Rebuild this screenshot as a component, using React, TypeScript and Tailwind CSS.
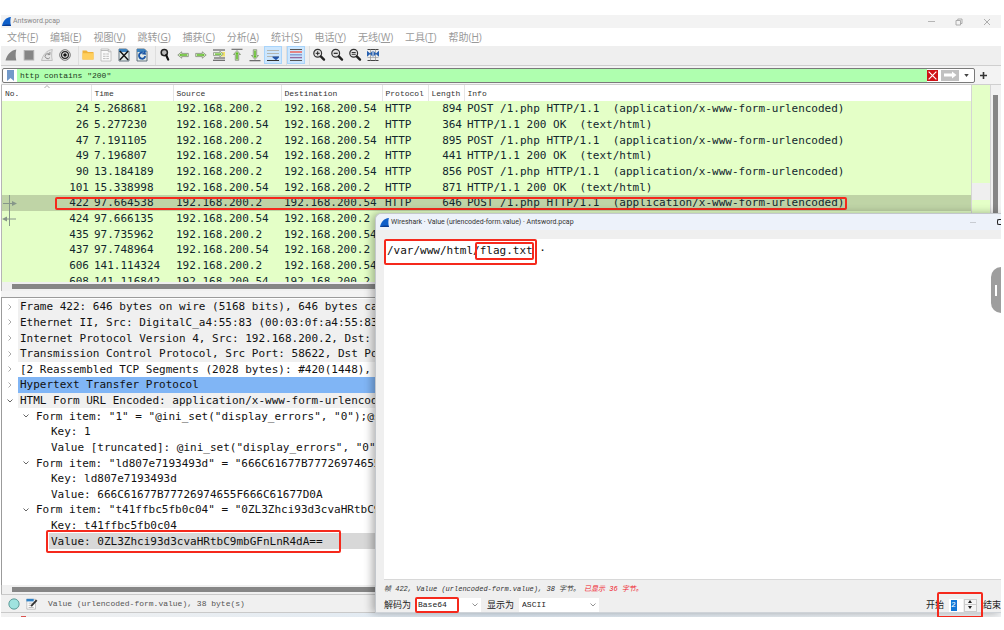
import type { ReactNode } from 'react';
import { useState } from 'react';

type Packet = {
  no: number;
  time: string;
  source: string;
  destination: string;
  length: number;
  info: string;
};

type TreeRow = {
  text: string;
  level: number;
  state?: 'open' | 'closed';
  tone?: 'gray' | 'blue' | 'selected';
};

const CLIENT = '192.168.200.2';
const SERVER = '192.168.200.54';
const POST = 'POST /1.php HTTP/1.1  (application/x-www-form-urlencoded)';
const OK = 'HTTP/1.1 200 OK  (text/html)';

const packets: Packet[] = [
  { no: 24, time: '5.268681', source: CLIENT, destination: SERVER, length: 894, info: POST },
  { no: 26, time: '5.277230', source: SERVER, destination: CLIENT, length: 364, info: OK },
  { no: 47, time: '7.191105', source: CLIENT, destination: SERVER, length: 895, info: POST },
  { no: 49, time: '7.196807', source: SERVER, destination: CLIENT, length: 441, info: OK },
  { no: 90, time: '13.184189', source: CLIENT, destination: SERVER, length: 856, info: POST },
  { no: 101, time: '15.338998', source: SERVER, destination: CLIENT, length: 871, info: OK },
  { no: 422, time: '97.664538', source: CLIENT, destination: SERVER, length: 646, info: POST },
  { no: 424, time: '97.666135', source: SERVER, destination: CLIENT, length: 441, info: OK },
  { no: 435, time: '97.735962', source: CLIENT, destination: SERVER, length: 895, info: POST },
  { no: 437, time: '97.748964', source: SERVER, destination: CLIENT, length: 441, info: OK },
  { no: 606, time: '141.114324', source: CLIENT, destination: SERVER, length: 856, info: POST },
  { no: 608, time: '141.116842', source: SERVER, destination: CLIENT, length: 871, info: OK },
];

const tree: TreeRow[] = [
  { text: 'Frame 422: 646 bytes on wire (5168 bits), 646 bytes captured', level: 0, state: 'closed', tone: 'gray' },
  { text: 'Ethernet II, Src: DigitalC_a4:55:83 (00:03:0f:a4:55:83)', level: 0, state: 'closed', tone: 'gray' },
  { text: 'Internet Protocol Version 4, Src: 192.168.200.2, Dst: 192.168.200.54', level: 0, state: 'closed', tone: 'gray' },
  { text: 'Transmission Control Protocol, Src Port: 58622, Dst Port: 80', level: 0, state: 'closed', tone: 'gray' },
  { text: '[2 Reassembled TCP Segments (2028 bytes): #420(1448), #422(580)]', level: 0, state: 'closed' },
  { text: 'Hypertext Transfer Protocol', level: 0, state: 'closed', tone: 'blue' },
  { text: 'HTML Form URL Encoded: application/x-www-form-urlencoded', level: 0, state: 'open', tone: 'gray' },
  { text: 'Form item: "1" = "@ini_set("display_errors", "0");@set_time_limit(0)', level: 1, state: 'open' },
  { text: 'Key: 1', level: 2 },
  { text: 'Value [truncated]: @ini_set("display_errors", "0");', level: 2 },
  { text: 'Form item: "ld807e7193493d" = "666C61677B77726974655F666C61677D0A"', level: 1, state: 'open' },
  { text: 'Key: ld807e7193493d', level: 2 },
  { text: 'Value: 666C61677B77726974655F666C61677D0A', level: 2 },
  { text: 'Form item: "t41ffbc5fb0c04" = "0ZL3Zhci93d3cvaHRtbC9mbGFnLnR4dA=="', level: 1, state: 'open' },
  { text: 'Key: t41ffbc5fb0c04', level: 2 },
  { text: 'Value: 0ZL3Zhci93d3cvaHRtbC9mbGFnLnR4dA==', level: 2, tone: 'selected' },
];

const menus = [
  ['文件', 'F'],
  ['编辑', 'E'],
  ['视图', 'V'],
  ['跳转', 'G'],
  ['捕获', 'C'],
  ['分析', 'A'],
  ['统计', 'S'],
  ['电话', 'Y'],
  ['无线', 'W'],
  ['工具', 'T'],
  ['帮助', 'H'],
];

const indents = ['pl-[18px]', 'pl-[34px]', 'pl-[49px]'];
const arrowIndents = ['left-[5px]', 'left-[21px]', 'left-[36px]'];
const tones = { gray: 'bg-[#f0f0f0]', blue: 'bg-[#80b5f5]', selected: 'bg-[#d8d8d8]' };
const toneOffsets = ['left-[16px]', 'left-[32px]', 'left-[47px]'];

function Svg({ children, className = 'size-[14px]' }: { children: ReactNode; className?: string }) {
  return (
    <svg viewBox="0 0 14 14" className={className} fill="none" aria-hidden="true">
      {children}
    </svg>
  );
}

function Logo() {
  return (
    <Svg className="size-[9px] shrink-0">
      <path d="M0 14C1.5 6.5 5.5 1 14 0C12.6 3 12.8 10 14 14Z" fill="#0f5fc9" />
      <path d="M0 14C3 12 9 11.5 13.3 12L14 14Z" fill="#0a3c92" />
    </Svg>
  );
}

function Lens({ children }: { children?: ReactNode }) {
  return (
    <Svg>
      <circle cx="5.7" cy="5.3" r="3.9" fill="#e4e4e4" stroke="#333" strokeWidth="1.2" />
      {children}
      <path d="M8.8 8.4L12 11.6" stroke="#222" strokeWidth="2.4" strokeLinecap="round" />
    </Svg>
  );
}

const toolGroups: { label: string; icon: ReactNode; active?: boolean }[][] = [
  [
    {
      label: 'Start capture',
      icon: (
        <Svg>
          <path d="M1.5 12.5C3 7 6.5 2.3 12.3 1.5C11.4 5 11.5 9 12.3 12.5Z" fill="#858585" />
        </Svg>
      ),
    },
    {
      label: 'Stop capture',
      icon: (
        <Svg>
          <rect x="2.2" y="2.5" width="9.5" height="9.5" fill="#858585" stroke="#b0b0b0" strokeWidth="1" />
        </Svg>
      ),
    },
    {
      label: 'Restart capture',
      icon: (
        <Svg>
          <path d="M1.5 12.5C3 7 6.5 2.3 12.3 1.5C11.4 5 11.5 9 12.3 12.5Z" fill="#e6e6e6" stroke="#b5b5b5" strokeWidth="0.8" />
          <path d="M9.5 6.2A2.6 2.6 0 1 0 9.9 9.6M9.9 4V6.6H7.5" stroke="#8c8c8c" />
        </Svg>
      ),
    },
    {
      label: 'Capture options',
      icon: (
        <Svg>
          <circle cx="7" cy="7" r="5.3" fill="#eee" stroke="#555" strokeWidth="0.8" />
          <circle cx="7" cy="7" r="3.4" stroke="#222" strokeWidth="1.2" />
          <circle cx="7" cy="7" r="1.8" fill="#111" />
        </Svg>
      ),
    },
  ],
  [
    {
      label: 'Open',
      icon: (
        <Svg>
          <path d="M1.5 2.5H5.5L7 4H12.5V11.5H1.5Z" fill="#efb33c" />
          <path d="M1.5 5.2H12.5V11.5H1.5Z" fill="#ffcf5e" />
        </Svg>
      ),
    },
    {
      label: 'Save',
      icon: (
        <Svg>
          <path d="M2 1H9.5L12 3.5V13H2Z" fill="#fafafa" stroke="#b8b8b8" strokeWidth="0.8" />
          <path d="M2 2.5H9.3M9.3 1V3.8H12" stroke="#b5b5b5" strokeWidth="0.9" />
          <path d="M4 6H10.5M4 8.3H10.5M4 10.6H10.5" stroke="#bdbdbd" strokeWidth="1" strokeDasharray="2.6 0.7" />
        </Svg>
      ),
    },
    {
      label: 'Close file',
      icon: (
        <Svg>
          <path d="M2 1H9.5L12 3.5V13H2Z" fill="#e3ebe8" stroke="#456" strokeWidth="0.8" />
          <path d="M2 1H9.5L12 4H2Z" fill="#3d82bd" />
          <path d="M2.8 3L11.2 12M11.2 3L2.8 12" stroke="#151515" strokeWidth="1.5" />
        </Svg>
      ),
    },
    {
      label: 'Reload',
      icon: (
        <Svg>
          <path d="M2 1H9.5L12 3.5V13H2Z" fill="#e3ebe8" stroke="#456" strokeWidth="0.8" />
          <path d="M2 1H9.5L12 4H2Z" fill="#3d82bd" />
          <path d="M7.8 4.6A3.1 3.1 0 1 0 10.2 8.2" stroke="#1c56a5" strokeWidth="1.9" />
          <path d="M6.8 6.3L11 6.8L10.2 2.2Z" fill="#1c56a5" />
        </Svg>
      ),
    },
  ],
  [
    {
      label: 'Find packet',
      icon: (
        <Svg>
          <circle cx="6.3" cy="4.6" r="3.1" fill="#bbb" stroke="#222" strokeWidth="1.5" />
          <path d="M8.2 7.2L10.2 11.6" stroke="#111" strokeWidth="2.2" strokeLinecap="round" />
        </Svg>
      ),
    },
    {
      label: 'Previous packet',
      icon: (
        <Svg>
          <path d="M1.8 7L5.7 3.8V5.4H12.3V8.6H5.7V10.2Z" fill="#e9f5dd" stroke="#7d8a74" strokeWidth="0.8" />
          <path d="M3.2 7L5.2 5.4V6.2H11.2V7.8H5.2V8.6Z" fill="#5fbb27" />
        </Svg>
      ),
    },
    {
      label: 'Next packet',
      icon: (
        <Svg>
          <path d="M12.2 7L8.3 3.8V5.4H1.7V8.6H8.3V10.2Z" fill="#e9f5dd" stroke="#7d8a74" strokeWidth="0.8" />
          <path d="M10.8 7L8.8 5.4V6.2H2.8V7.8H8.8V8.6Z" fill="#5fbb27" />
        </Svg>
      ),
    },
    {
      label: 'Go to packet',
      icon: (
        <Svg>
          <path d="M1 2H13M2 10H13M1 12.3H13" stroke="#4a4a4a" strokeWidth="1.1" />
          <rect x="9" y="4" width="4" height="4.5" fill="#f1e36b" />
          <path d="M11.3 6L7.8 3.2V4.6H1.5V7.6H7.8V8.9Z" fill="#e9f5dd" stroke="#7d8a74" strokeWidth="0.7" />
          <path d="M9.8 6L8.2 4.9V5.4H3V6.7H8.2V7.2Z" fill="#5fbb27" />
        </Svg>
      ),
    },
    {
      label: 'First packet',
      icon: (
        <Svg>
          <path d="M1.5 1.3H12.5" stroke="#666" strokeWidth="1.1" />
          <path d="M7 2.5L10.5 6.5H8.7V12.3H5.3V6.5H3.5Z" fill="#e9f5dd" stroke="#7d8a74" strokeWidth="0.8" />
          <path d="M7 3.8L8.9 6.1H7.8V11.4H6.2V6.1H5.1Z" fill="#5fbb27" />
        </Svg>
      ),
    },
    {
      label: 'Last packet',
      icon: (
        <Svg>
          <path d="M1.5 12.7H12.5" stroke="#555" strokeWidth="1.1" />
          <path d="M7 11.5L10.5 7.5H8.7V1.7H5.3V7.5H3.5Z" fill="#e9f5dd" stroke="#7d8a74" strokeWidth="0.8" />
          <path d="M7 10.2L8.9 7.9H7.8V2.6H6.2V7.9H5.1Z" fill="#5fbb27" />
        </Svg>
      ),
    },
    {
      label: 'Auto scroll',
      active: true,
      icon: (
        <Svg className="size-[14px] shrink-0">
          <path d="M1 2.5H13M1 5.5H13M1 8.5H13" stroke="#b4b6b0" strokeWidth="1" />
          <path d="M1 12.5H13" stroke="#333" strokeWidth="1" />
          <path d="M6.5 8.5H13V9.5L10 12.3L6.5 9.5Z" fill="#2355a8" />
        </Svg>
      ),
    },
  ],
  [
    {
      label: 'Colorize',
      active: true,
      icon: (
        <Svg className="size-[14px] shrink-0">
          <path d="M1 1.5H13M1 12.5H13" stroke="#555" />
          <path d="M1 4H13" stroke="#ee5a50" strokeWidth="1.4" />
          <path d="M1 6.8H13" stroke="#7f9bd0" strokeWidth="1.4" />
          <path d="M1 9.6H13" stroke="#94699f" strokeWidth="1.4" />
        </Svg>
      ),
    },
  ],
  [
    {
      label: 'Zoom in',
      icon: (
        <Lens>
          <path d="M3.7 5.3H7.7M5.7 3.3V7.3" stroke="#222" />
        </Lens>
      ),
    },
    {
      label: 'Zoom out',
      icon: (
        <Lens>
          <path d="M3.7 5.3H7.7" stroke="#222" strokeWidth="1.2" />
        </Lens>
      ),
    },
    {
      label: 'Normal size',
      icon: (
        <Lens>
          <path d="M3.7 4.5H7.7M3.7 6.3H7.7" stroke="#222" strokeWidth="0.9" />
        </Lens>
      ),
    },
    {
      label: 'Resize columns',
      icon: (
        <Svg>
          <path d="M1.5 1.5H12.5M1.5 12.5H12.5" stroke="#444" />
          <path d="M1.5 9.5H12.5" stroke="#aaa" strokeWidth="0.8" />
          <path d="M4.5 1.5V12.5M9.5 1.5V12.5" stroke="#999" strokeWidth="0.8" />
          <path d="M1 2.8L4.5 5.8L1 8.8ZM6.5 2.8V8.8L4 5.8ZM7.5 2.8V8.8L10 5.8ZM13 2.8L9.5 5.8L13 8.8Z" fill="#2861b0" />
        </Svg>
      ),
    },
  ],
];

function Toolbar() {
  return (
    <div className="flex h-[19px] shrink-0 items-center gap-[5px] bg-[#efefef] pl-px">
      {toolGroups.map((group, i) => (
        <div key={i} className={`flex h-full ${i > 0 ? 'border-l border-[#dedede] -ml-px' : ''}`}>
          {group.map((tool) => (
            <button
              key={tool.label}
              aria-label={tool.label}
              className={`flex h-[18px] w-[18px] items-center justify-center ${tool.active ? 'border border-[#a9d4fa] bg-[#cce6fd]' : ''}`}
            >
              {tool.icon}
            </button>
          ))}
        </div>
      ))}
    </div>
  );
}

function FilterBar() {
  const [filter, setFilter] = useState('http contains "200"');

  return (
    <div className="flex h-[20px] shrink-0 items-center gap-[5px] border-y border-[#cfcfcf] bg-[#f3f3f3] pl-px">
      <div className="flex h-[15px] min-w-0 flex-1 items-center rounded-xs border border-[#7a7a7a] bg-white">
        <button aria-label="Bookmarks" className="flex w-[14px] justify-center">
          <svg viewBox="0 0 7 11" className="h-[11px] w-[7px]" aria-hidden="true">
            <path d="M0 0H7V11L3.5 8L0 11Z" fill="#7299c9" />
          </svg>
        </button>
        <input
          aria-label="Display filter"
          value={filter}
          onChange={(e) => setFilter(e.target.value)}
          className="h-full min-w-0 flex-1 bg-[#afffaf] pl-[3px] font-['Liberation_Mono',monospace] text-[8px] text-[#1c3a1c] outline-none"
        />
        <button aria-label="Clear" className="flex h-[11px] w-[11px] items-center justify-center bg-[#d01217]">
          <Svg className="size-[9px]">
            <path d="M1 1L13 13M13 1L1 13" stroke="#fff" strokeWidth="1.8" />
          </Svg>
        </button>
        <button aria-label="Apply" className="ml-[3px] flex h-[11px] w-[18px] items-center justify-center bg-[#c1c1c1]">
          <svg viewBox="0 0 14 8" className="h-[8px] w-[14px]" aria-hidden="true">
            <path d="M1 2.5H9V0.5L13.5 4L9 7.5V5.5H1Z" fill="#fff" />
          </svg>
        </button>
        <button aria-label="Filter history" className="flex w-[15px] justify-center">
          <svg viewBox="0 0 6 4" className="h-[3px] w-[5px]" aria-hidden="true">
            <path d="M0 0H6L3 4Z" fill="#444" />
          </svg>
        </button>
      </div>
      <button aria-label="Add filter button" className="flex w-[21px]">
        <svg viewBox="0 0 7 7" className="size-[7px]" aria-hidden="true">
          <path d="M3.5 0V7M0 3.5H7" stroke="#333" strokeWidth="1.6" />
        </svg>
      </button>
    </div>
  );
}

function PacketList() {
  const [selected, setSelected] = useState(422);
  const th = "border-r border-[#e5e5e5] p-0 pl-[3px] text-left font-['Liberation_Mono',monospace] font-normal last:border-r-0";

  return (
    <div className="relative flex h-[197px] shrink-0 overflow-hidden border-l border-[#b5b5b5] bg-white">
      <div className="min-w-0 flex-1">
        <table className="h-[204px] w-full table-fixed border-collapse whitespace-pre font-['DejaVu_Sans_Mono',monospace] text-[11px] leading-[15px] text-[#12272e]">
          <colgroup>
            <col className="w-[89px]" />
            <col className="w-[82px]" />
            <col className="w-[108px]" />
            <col className="w-[101px]" />
            <col className="w-[46px]" />
            <col className="w-[36px]" />
            <col />
          </colgroup>
          <thead>
            <tr className="h-[16px] bg-white text-[8px] text-[#333]">
              <th className={th}>
                No.
                <svg viewBox="0 0 6 3" className="absolute top-0 left-[42px] h-[3px] w-[6px]" aria-hidden="true">
                  <path d="M0.5 3L3 0.5L5.5 3" fill="none" stroke="#888" strokeWidth="0.7" />
                </svg>
              </th>
              <th className={th}>Time</th>
              <th className={th}>Source</th>
              <th className={th}>Destination</th>
              <th className={th}>Protocol</th>
              <th className={th}>Length</th>
              <th className={th}>Info</th>
            </tr>
          </thead>
          <tbody>
            {packets.map((p) => (
              <tr
                key={p.no}
                onClick={() => setSelected(p.no)}
                className={p.no === selected ? 'bg-[#bfd4a6]' : 'bg-[#e4ffc7]'}
              >
                <td className="p-0 pr-[2px] text-right">{p.no}</td>
                <td className="p-0 pl-[3px]">{p.time}</td>
                <td className="p-0 pl-[3px]">{p.source}</td>
                <td className="p-0 pl-[3px]">{p.destination}</td>
                <td className="p-0 pl-[3px]">HTTP</td>
                <td className="p-0 pr-[2px] text-right">{p.length}</td>
                <td className="overflow-hidden p-0 pl-[3px]">{p.info}</td>
              </tr>
            ))}
          </tbody>
        </table>
      </div>
      <div className="flex w-[20px] flex-col border-x border-[#d5d5d5] bg-[#e4ffc7]">
        <div className="mt-[98px] h-[17px] bg-[#efefef]" />
      </div>
      <div className="w-[10px] bg-[#f1f1f1] px-[2px] pt-[10px]">
        <div className="h-full w-[5px] bg-[#868686]" />
      </div>
      {/* request / response markers */}
      <svg viewBox="0 0 16 32" className="absolute top-[110px] left-0 h-[32px] w-[16px]" fill="none" aria-hidden="true">
        <path d="M7.5 0V31M1 8.5H12M2 24H14" stroke="#86968a" />
        <path d="M10 6L15 8.5L10 11ZM5 21.5L0 24L5 26.5Z" fill="#86968a" />
      </svg>
      <div className="pointer-events-none absolute top-[112px] right-[154px] left-[53px] h-[13px] rounded-xs border-2 border-[#f5291c]" />
    </div>
  );
}

function HScroll() {
  return (
    <div className="h-[9px] shrink-0 border-l border-[#b5b5b5] bg-[#f0f0f0] py-[2px] pl-[10px]">
      <div className="h-[5px] bg-[#868686]" />
    </div>
  );
}

function Arrow({ open }: { open: boolean }) {
  return (
    <svg viewBox="0 0 6 6" className="size-[6px]" fill="none" aria-hidden="true">
      <path d={open ? 'M0.5 1.5L3 4L5.5 1.5' : 'M1.5 0.5L4 3L1.5 5.5'} stroke={open ? '#555' : '#a0a0a0'} strokeWidth="0.9" />
    </svg>
  );
}

function DetailTree() {
  return (
    <div className="relative min-h-0 flex-1 overflow-hidden border-t border-l border-[#9b9b9b] bg-white pt-px">
      <ul className="grid h-[250px] auto-rows-fr font-['DejaVu_Sans_Mono',monospace] text-[11px] leading-[15px] text-[#111]">
        {tree.map((row) => (
          <li key={row.text} className={`relative flex items-center overflow-hidden whitespace-pre ${indents[row.level]}`}>
            {row.tone && <div className={`absolute inset-y-0 right-0 ${toneOffsets[row.level]} ${tones[row.tone]}`} />}
            {row.state && (
              <button
                aria-label={row.state === 'open' ? 'Collapse' : 'Expand'}
                className={`absolute ${arrowIndents[row.level]}`}
              >
                <Arrow open={row.state === 'open'} />
              </button>
            )}
            <span className="relative">{row.text}</span>
          </li>
        ))}
      </ul>
      <div className="pointer-events-none absolute top-[232px] left-[44px] h-[23px] w-[295px] rounded-xs border-2 border-[#f5291c]" />
    </div>
  );
}

function Picker({ id, options, className }: { id: string; options: string[]; className: string }) {
  return (
    <div className={`relative flex h-[14px] items-center bg-white ${className}`}>
      <select
        id={id}
        className="h-full w-full appearance-none pl-[3px] font-['Liberation_Mono',monospace] text-[8px] text-[#222] outline-none"
      >
        {options.map((o) => (
          <option key={o}>{o}</option>
        ))}
      </select>
      <svg viewBox="0 0 6 4" className="pointer-events-none absolute right-[3px] h-[4px] w-[6px]" fill="none" aria-hidden="true">
        <path d="M0.5 0.5L3 3L5.5 0.5" stroke="#777" strokeWidth="0.8" />
      </svg>
    </div>
  );
}

function ValueDialog() {
  const [start, setStart] = useState(2);

  return (
    <div
      role="dialog"
      aria-label="Wireshark · Value"
      className="absolute top-[198px] right-0 bottom-[4px] left-[374px] flex flex-col rounded-tl-md border-t border-l border-[#c3c7cc] bg-[#efefef] shadow-[-3px_0_9px_rgba(0,0,0,0.3)]"
    >
      <div className="flex h-[16px] shrink-0 items-center rounded-tl-md bg-[#edf2fa] pl-[4px]">
        <Logo />
        <span className="ml-[2px] flex-1 font-['Roboto',sans-serif] text-[7px] text-[#333]">
          Wireshark · Value (urlencoded-form.value) · Antsword.pcap
        </span>
        <button aria-label="Minimize" className="mr-[21px] h-px w-[6px] bg-[#c8ccd2]" />
        <button aria-label="Maximize" className="h-[6px] w-[4px] rounded-l-xs border border-r-0 border-[#222]" />
      </div>
      <div className="relative mt-[9px] ml-[8px] min-h-0 flex-1 border-b border-[#d8d8d8] bg-white">
        <textarea
          aria-label="Value"
          readOnly
          value="/var/www/html/flag.txt ·"
          className="block h-full w-full resize-none pt-[4px] pl-[3px] font-['DejaVu_Sans_Mono',monospace] text-[11px] leading-[15px] text-[#111] outline-none"
        />
        <div className="pointer-events-none absolute top-0 left-0 h-[26px] w-[153px] rounded-xs border-2 border-[#f5291c]" />
        <div className="pointer-events-none absolute top-[3px] left-[91px] h-[18px] w-[59px] rounded-xs border-2 border-[#f5291c]" />
      </div>
      <p className="flex h-[18px] shrink-0 items-center gap-[4px] whitespace-pre pl-[8px] font-['Liberation_Mono','Noto_Sans_CJK_SC',monospace] text-[7px] italic text-[#333]">
        <span>帧 422, Value (urlencoded-form.value), 38 字节。</span>
        <span className="text-[#f0202a]">已显示 36 字节。</span>
      </p>
      <div className="flex h-[15px] shrink-0 items-center border-b border-[#cfd3d8] pl-[8px] font-['Noto_Sans_CJK_SC',sans-serif] text-[9px] text-[#222]">
        <label htmlFor="decode-as">解码为</label>
        <div className="relative ml-[4px]">
          <Picker id="decode-as" options={['Base64', 'None']} className="w-[66px]" />
          <div className="pointer-events-none absolute -top-px left-0 h-[16px] w-[44px] rounded-xs border-2 border-[#f5291c]" />
        </div>
        <label htmlFor="show-as" className="ml-[6px]">显示为</label>
        <Picker id="show-as" options={['ASCII', 'UTF-8']} className="ml-[5px] w-[80px]" />
        <label htmlFor="range-start" className="ml-auto">开始</label>
        <div className="relative ml-[5px] flex h-[13px] items-center gap-px">
          <span className="flex h-full w-[14px] items-center bg-white pl-[2px]">
            <input
              id="range-start"
              value={start}
              onChange={(e) => setStart(Number(e.target.value) || 0)}
              className="h-[11px] w-[6px] bg-[#1177d7] font-['Liberation_Mono',monospace] text-[8px] text-white outline-none"
            />
          </span>
          <span className="flex w-[13px] flex-col border border-[#ccc] bg-[#f5f5f5]">
            <button aria-label="Increase" onClick={() => setStart(start + 1)} className="flex h-[5px] items-center justify-center border-b border-[#ccc]">
              <svg viewBox="0 0 4 3" className="h-[3px] w-[4px]" aria-hidden="true"><path d="M0 3L2 0L4 3Z" fill="#222" /></svg>
            </button>
            <button aria-label="Decrease" onClick={() => setStart(start - 1)} className="flex h-[6px] items-center justify-center">
              <svg viewBox="0 0 4 3" className="h-[3px] w-[4px]" aria-hidden="true"><path d="M0 0L2 3L4 0Z" fill="#222" /></svg>
            </button>
          </span>
          <div className="pointer-events-none absolute -top-[7px] -left-[12px] h-[26px] w-[46px] rounded-xs border-2 border-[#f5291c]" />
        </div>
        <span className="ml-[6px]">结束</span>
      </div>
    </div>
  );
}

export default function App() {
  return (
    <div className="h-screen bg-white pt-[15px] pr-[3px] pb-[13px] pl-px">
      <div className="relative flex h-full flex-col overflow-hidden">
        <header className="flex h-[13px] shrink-0 items-center bg-[#f3f3f3] pl-px">
          <Logo />
          <span className="ml-[2px] flex-1 font-['Roboto',sans-serif] text-[7px] text-[#888]">Antsword.pcap</span>
          <div className="flex items-center gap-[20px] pr-[10px]">
            <button aria-label="Minimize" className="h-px w-[7px] bg-[#b5b5b5]" />
            <button aria-label="Restore">
              <svg viewBox="0 0 8 8" className="size-[8px]" fill="none" aria-hidden="true">
                <path d="M1 2.5H5.5V7H1ZM2.8 2.5V1H7V5.5H5.5" stroke="#a5a5a5" strokeWidth="0.9" />
              </svg>
            </button>
            <button aria-label="Close">
              <svg viewBox="0 0 8 8" className="size-[8px]" fill="none" aria-hidden="true">
                <path d="M1 1L7 7M7 1L1 7" stroke="#a5a5a5" strokeWidth="0.9" />
              </svg>
            </button>
          </div>
        </header>
        <nav className="flex h-[18px] shrink-0 items-center gap-[12px] bg-white pl-[6px] font-['Open_Sans','Noto_Sans_CJK_SC',sans-serif] text-[10px] text-[#999]">
          {menus.map(([name, key]) => (
            <button key={key} className="shrink-0">
              {name}(<u>{key}</u>)
            </button>
          ))}
        </nav>
        <Toolbar />
        <FilterBar />
        <PacketList />
        <HScroll />
        <div className="h-[6px] shrink-0 bg-[#f3f3f3]" />
        <DetailTree />
        <HScroll />
        <footer className="flex h-[19px] shrink-0 items-center border-y border-[#c9c9c9] bg-[#f0f0f0] pl-[7px]">
          <button aria-label="Expert information">
            <Svg className="size-[12px]">
              <circle cx="7" cy="7" r="6" fill="#9fe3df" stroke="#4d8f8c" />
            </Svg>
          </button>
          <button aria-label="Capture comment" className="ml-[6px]">
            <Svg className="size-[12px]">
              <path d="M1 1.5H11V13H1Z" fill="#fff" stroke="#aaa" strokeWidth="0.8" />
              <path d="M0.5 1H9V4H0.5Z" fill="#2f80c4" />
              <path d="M3 6H8M3 8.5H6M3 11H9" stroke="#999" strokeWidth="0.8" />
              <path d="M6 9.5L12.5 2.5" stroke="#333" strokeWidth="2.2" />
            </Svg>
          </button>
          <span className="ml-[10px] font-['Liberation_Mono',monospace] text-[8px] text-[#555]">
            Value (urlencoded-form.value), 38 byte(s)
          </span>
        </footer>
        <div className="h-[4px] shrink-0 bg-linear-to-r from-[#f1f1f1] via-[#dde8f2] to-[#f0f2f4] pt-[3px] pl-[20px]">
          <div className="h-px w-[5px] bg-[#d9534f]" />
        </div>
        <ValueDialog />
        <button
          aria-label="Open side panel"
          className="absolute top-[252px] right-0 flex h-[46px] w-[10px] items-center rounded-l-xl bg-[#9e9e9e] pl-[4px]"
        >
          <span className="h-[11px] w-[2px] bg-white" />
        </button>
      </div>
    </div>
  );
}
